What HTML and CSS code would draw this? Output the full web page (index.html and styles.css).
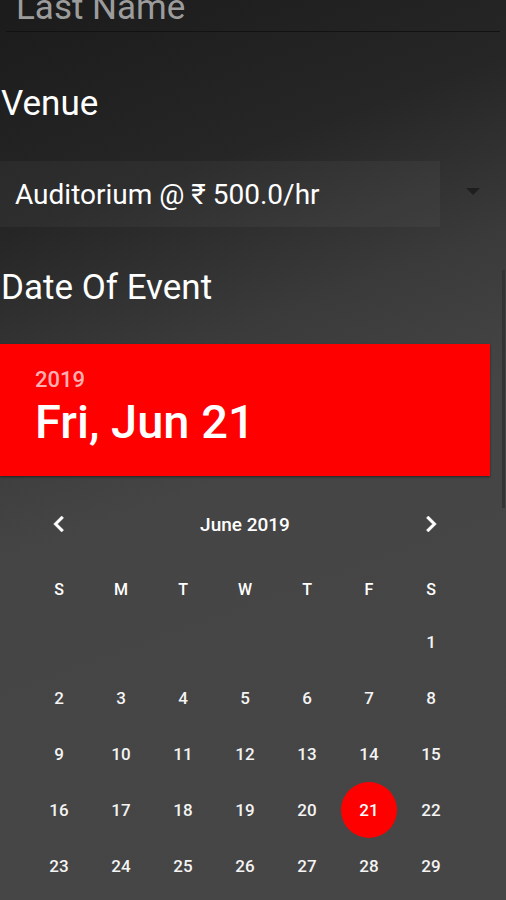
FILE: index.html
```html
<!DOCTYPE html>
<html>
	<head>
		<meta charset="utf-8">
		<title>Book Venue</title>
		<link rel="stylesheet" href="styles.css">
	</head>
	<body>
		<div class="field">
			<span class="hint">Last Name</span>
		</div>
		<div class="label venue-label">Venue</div>
		<div class="spinner-row">
			<div class="spinner">Auditorium @ ₹ 500.0/hr</div>
			<div class="arrow"></div>
		</div>
		<div class="label date-label">Date Of Event</div>
		<div class="picker-head">
			<div class="year">2019</div>
			<div class="date">Fri, Jun 21</div>
		</div>
		<div class="calendar">
			<div class="month-row">
				<svg class="chev" viewBox="0 0 24 24"><path d="M15.41 7.41L14 6l-6 6 6 6 1.41-1.41L10.83 12z"/></svg>
				<span class="month">June 2019</span>
				<svg class="chev" viewBox="0 0 24 24"><path d="M10 6L8.59 7.41 13.17 12l-4.58 4.59L10 18l6-6z"/></svg>
			</div>
			<div class="week">
				<span>S</span><span>M</span><span>T</span><span>W</span><span>T</span><span>F</span><span>S</span>
			</div>
			<div class="days">
				<span></span><span></span><span></span><span></span><span></span><span></span><span>1</span>
				<span>2</span><span>3</span><span>4</span><span>5</span><span>6</span><span>7</span><span>8</span>
				<span>9</span><span>10</span><span>11</span><span>12</span><span>13</span><span>14</span><span>15</span>
				<span>16</span><span>17</span><span>18</span><span>19</span><span>20</span><span class="sel">21</span><span>22</span>
				<span>23</span><span>24</span><span>25</span><span>26</span><span>27</span><span>28</span><span>29</span>
			</div>
		</div>
		<div class="scrollbar"></div>
	</body>
</html>
```

FILE: styles.css
```css
html, body {
	height: 100%;
	width: 100%;
}
body {
	margin: 0;
	overflow: hidden;
	position: relative;
	font-family: Roboto, "Liberation Sans", sans-serif;
	color: #fff;
	background: linear-gradient(160deg, #1b1b1b 0%, #262626 22%, #3a3a3a 38%, #454545 52%, #464646 100%);
}
.field {
	margin: 0 6px;
	padding: 0 0 15px 10px;
	border-bottom: 1px solid #121212;
	font-size: 35px;
	line-height: 16px;
	height: 16px;
}
.hint {
	color: #9c9c9c;
}
.label {
	font-size: 35px;
	line-height: 40px;
	padding-left: 1px;
}
.venue-label {
	margin-top: 52px;
}
.spinner-row {
	display: flex;
	align-items: center;
	margin-top: 37px;
	height: 66px;
}
.spinner {
	width: 425px;
	height: 66px;
	padding-left: 15px;
	display: flex;
	align-items: center;
	font-size: 28px;
	background: rgba(255, 255, 255, 0.04);
}
.arrow {
	margin-left: 26px;
	margin-top: -6px;
	width: 0;
	height: 0;
	border-left: 7px solid transparent;
	border-right: 7px solid transparent;
	border-top: 7px solid #1e1e1e;
}
.date-label {
	margin-top: 41px;
}
.picker-head {
	margin-top: 36px;
	width: 455px;
	height: 108px;
	padding: 24px 0 0 35px;
	background: #ff0000;
	box-shadow: 0 1px 2px rgba(0, 0, 0, 0.45);
}
.year {
	font-size: 22px;
	line-height: 24px;
	font-weight: 500;
	color: rgba(255, 255, 255, 0.7);
}
.date {
	margin-top: 4px;
	font-size: 47px;
	line-height: 52px;
	font-weight: 500;
}
.calendar {
	padding: 24px 0 0 28px;
	width: 434px;
}
.month-row {
	display: flex;
	align-items: center;
	justify-content: space-between;
	height: 48px;
	padding: 0 15px;
}
.chev {
	width: 32px;
	height: 32px;
	fill: #fff;
	stroke: #fff;
	stroke-width: 0.4;
}
.month {
	font-size: 19px;
	font-weight: 500;
}
.week, .days {
	display: grid;
	grid-template-columns: repeat(7, 62px);
	text-align: center;
	font-weight: 500;
}
.week {
	margin-top: 16px;
	height: 50px;
	align-items: center;
	font-size: 16px;
}
.days {
	grid-auto-rows: 56px;
	font-size: 17px;
	color: #f4f4f4;
}
.days span {
	display: flex;
	align-items: center;
	justify-content: center;
}
.days .sel {
	width: 56px;
	margin: 0 3px;
	border-radius: 50%;
	background: #ff0000;
	color: #fff;
}
.scrollbar {
	position: absolute;
	left: 502px;
	top: 270px;
	width: 3px;
	height: 238px;
	background: #333;
}
```
